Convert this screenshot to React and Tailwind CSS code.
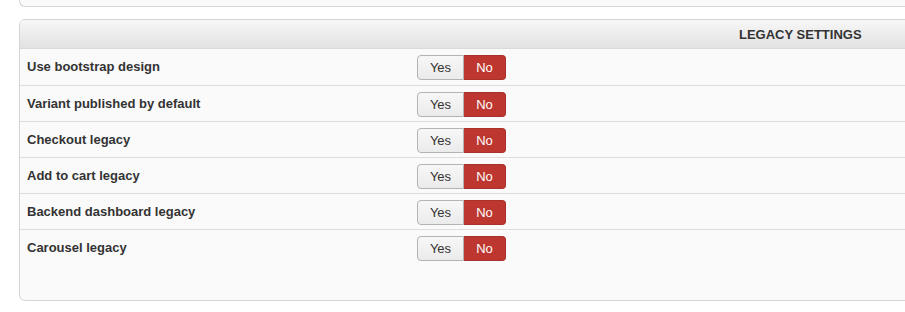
const rows = [
  'Use bootstrap design',
  'Variant published by default',
  'Checkout legacy',
  'Add to cart legacy',
  'Backend dashboard legacy',
  'Carousel legacy',
];

function YesNo() {
  return (
    <div className="flex h-[25px] mt-[6px] text-[13px]">
      <button className="w-[47px] h-full rounded-l-[4px] border border-[#b3b3b3] bg-gradient-to-b from-[#f7f7f7] to-[#ebebeb] text-[#333]">
        Yes
      </button>
      <button className="w-[42px] h-full rounded-r-[4px] border border-[#a8322b] border-l-0 bg-[#bd362f] text-white">
        No
      </button>
    </div>
  );
}

export default function App() {
  return (
    <div className="w-[905px] h-[312px] overflow-hidden bg-white font-['Liberation_Sans',Arial,sans-serif] text-[#333]">
      {/* bottom of previous panel */}
      <div className="ml-[19px] w-[1000px] h-[7px] border-l border-b border-[#d4d4d4] rounded-bl-[6px] bg-[#fafafa]"></div>

      <div className="ml-[19px] mt-[12px] w-[1000px] border border-[#d4d4d4] rounded-[6px] bg-[#fafafa] overflow-hidden">
        <div className="h-[29px] flex items-center pl-[719px] pt-[1px] bg-gradient-to-b from-[#f7f7f7] to-[#e2e2e2] border-b border-[#dadada] text-[13px] font-bold text-[#333]">
          LEGACY SETTINGS
        </div>
        {rows.map((label, i) => (
          <div
            key={label}
            className={`flex ${i === rows.length - 1 ? 'h-[70px]' : i === 0 ? 'h-[37px] border-b border-[#dddddd]' : 'h-[36px] border-b border-[#dddddd]'}`}
          >
            <div className="w-[397px] pl-[7px] pt-[9px] text-[13px] leading-[18px] font-bold text-[#333]">{label}</div>
            <YesNo />
          </div>
        ))}
      </div>
    </div>
  );
}
